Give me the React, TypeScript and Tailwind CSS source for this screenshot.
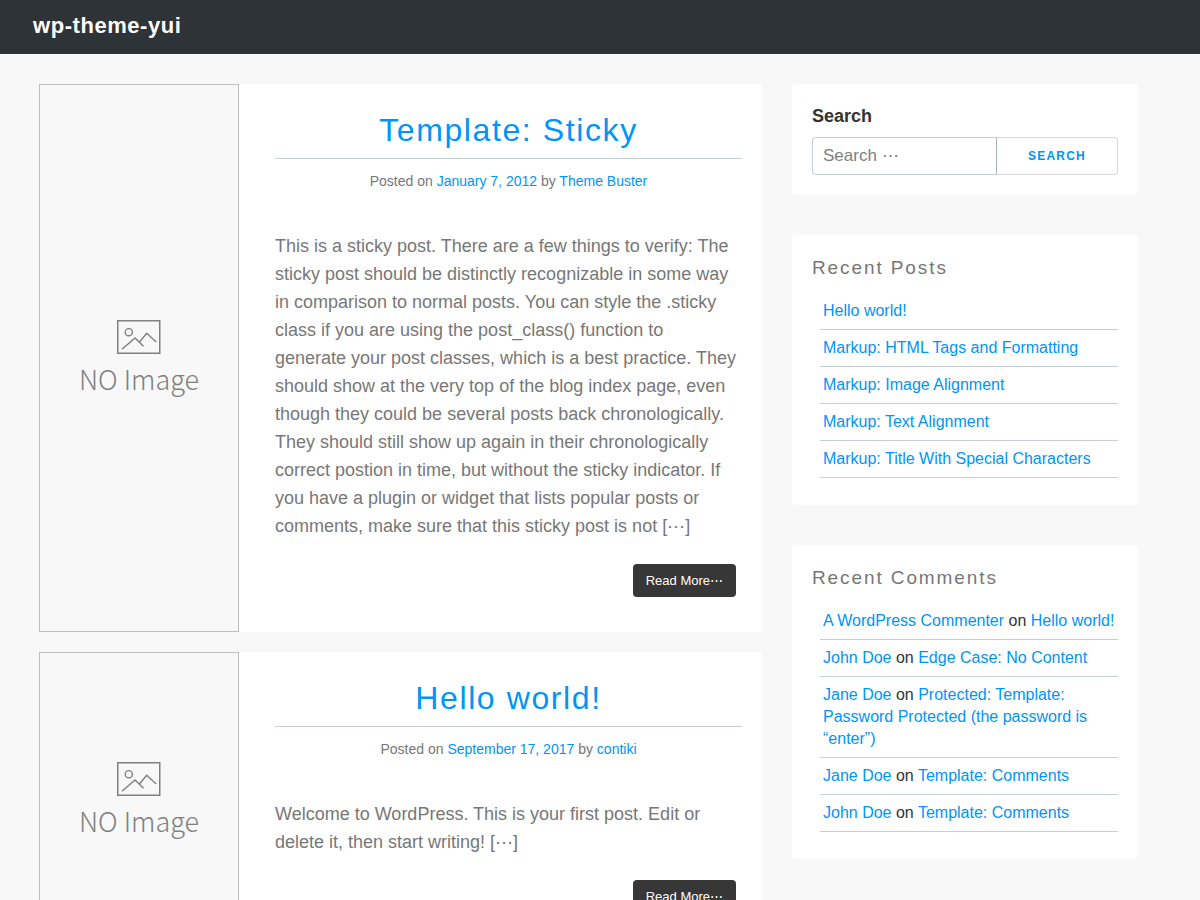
import type { ReactNode } from "react";

function Link({ children }: { children: ReactNode }) {
  return (
    <a href="#" className="text-[#0095f6] hover:underline">
      {children}
    </a>
  );
}

function NoImage() {
  return (
    <div className="flex w-[200px] shrink-0 flex-col items-center justify-center border border-[#bfbfbf] bg-[#f8f8f8] text-[#808080]">
      <svg width="44" height="34" viewBox="0 0 44 34" fill="none" stroke="currentColor" aria-hidden="true">
        <rect x="0.75" y="0.75" width="42" height="32.5" strokeWidth="1.5" />
        <circle cx="11.8" cy="12.2" r="3.6" strokeWidth="1.4" />
        <path d="M5 29.3 18 18l8.5 8.3M22.3 22.2l7.4-8.9 9.5 8.7" strokeWidth="1.4" />
      </svg>
      <span className="mt-2 font-['Noto_Sans_CJK_JP','Noto_Sans',sans-serif] text-[27px] leading-[34px] font-light">
        NO Image
      </span>
    </div>
  );
}

type PostProps = { title: string; date: string; author: string; children: ReactNode };

function Post({ title, date, author, children }: PostProps) {
  return (
    <article className="flex overflow-hidden rounded-r bg-white">
      <NoImage />
      <div className="flex min-w-0 flex-1 flex-col pt-[25px] pr-5 pb-[35px] pl-9">
        <h2 className="border-b border-[#c4d0d4] pb-[7px] text-center text-[32px] leading-[42px] tracking-wider">
          <Link>{title}</Link>
        </h2>
        <p className="mt-3 text-center text-[14px] leading-5 text-[#777]">
          Posted on <Link>{date}</Link> by <Link>{author}</Link>
        </p>
        <p className="mt-[41px] pr-[6px] text-[18px] leading-7 text-[#777]">{children}</p>
        <a
          href="#"
          className="mt-6 mr-[6px] self-end rounded bg-[#373737] px-[13px] py-[7px] text-[13px] leading-[19px] text-white"
        >
          Read More⋯
        </a>
      </div>
    </article>
  );
}

function Widget({ title, items }: { title: string; items: ReactNode[] }) {
  return (
    <section className="rounded bg-white px-5 pt-5 pb-[27px]">
      <h3 className="text-[19px] leading-[26px] tracking-widest text-[#777]">{title}</h3>
      <ul className="mt-3 ml-2">
        {items.map((item, i) => (
          <li key={i} className="border-b border-[#c4d0d4] py-[7px] pl-[3px] text-[16px] leading-[22px] text-[#333]">
            {item}
          </li>
        ))}
      </ul>
    </section>
  );
}

const posts = [
  "Hello world!",
  "Markup: HTML Tags and Formatting",
  "Markup: Image Alignment",
  "Markup: Text Alignment",
  "Markup: Title With Special Characters",
];

const comments = [
  ["A WordPress Commenter", "Hello world!"],
  ["John Doe", "Edge Case: No Content"],
  ["Jane Doe", "Protected: Template: Password Protected (the password is “enter”)"],
  ["Jane Doe", "Template: Comments"],
  ["John Doe", "Template: Comments"],
];

export default function App() {
  return (
    <div className="min-h-screen bg-[#f8f8f8] font-['Liberation_Sans',Arial,sans-serif]">
      <header className="flex h-[54px] items-center bg-[#2e3338] px-[33px] pb-[2px]">
        <a href="#" className="text-[22px] leading-8 font-bold tracking-wide text-white">
          wp-theme-yui
        </a>
      </header>
      <div className="flex items-start gap-[30px] pt-[30px] pr-[62px] pb-10 pl-[39px]">
        <main className="flex min-w-0 flex-1 flex-col gap-5">
          <Post title="Template: Sticky" date="January 7, 2012" author="Theme Buster">
            This is a sticky post. There are a few things to verify: The sticky post should be distinctly recognizable in
            some way in comparison to normal posts. You can style the .sticky class if you are using the post_class()
            function to generate your post classes, which is a best practice. They should show at the very top of the
            blog index page, even though they could be several posts back chronologically. They should still show up
            again in their chronologically correct postion in time, but without the sticky indicator. If you have a
            plugin or widget that lists popular posts or comments, make sure that this sticky post is not [⋯]
          </Post>
          <Post title="Hello world!" date="September 17, 2017" author="contiki">
            Welcome to WordPress. This is your first post. Edit or delete it, then start writing! [⋯]
          </Post>
        </main>
        <aside className="flex w-[346px] shrink-0 flex-col gap-10">
          <section className="rounded bg-white p-5">
            <form onSubmit={(e) => e.preventDefault()}>
              <label htmlFor="search" className="block text-[18px] leading-6 font-bold text-[#333]">
                Search
              </label>
              <div className="mt-[9px] flex h-[38px]">
                <input
                  id="search"
                  type="search"
                  placeholder="Search ⋯"
                  className="min-w-0 flex-1 rounded-l border border-r-0 border-[#c4d0d4] px-[10px] text-[17px] text-[#333] placeholder:text-[#808080]"
                />
                <button
                  type="submit"
                  className="w-[122px] rounded-r border border-[#d5d9db] border-l-[#a3b1b5] text-[12px] font-bold tracking-widest text-[#0095f6]"
                >
                  SEARCH
                </button>
              </div>
            </form>
          </section>
          <Widget title="Recent Posts" items={posts.map((p) => <Link>{p}</Link>)} />
          <Widget
            title="Recent Comments"
            items={comments.map(([who, where]) => (
              <>
                <Link>{who}</Link> on <Link>{where}</Link>
              </>
            ))}
          />
        </aside>
      </div>
    </div>
  );
}
